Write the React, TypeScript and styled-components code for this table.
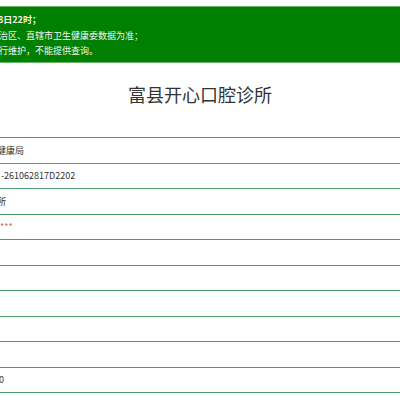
import React from "react";
import styled, { createGlobalStyle } from "styled-components";

const Global = createGlobalStyle`
  html, body { margin: 0; padding: 0; background: #fff; }
  body { font-family: "Microsoft YaHei", "Noto Sans CJK SC", "Noto Sans", sans-serif; overflow: hidden; }
`;

const Page = styled.div`
  width: 400px;
  height: 400px;
  overflow: hidden;
  padding-top: 6px;
  box-sizing: border-box;
`;

const Notice = styled.div`
  background: #008000;
  border-top: 1px solid #6cb36c;
  border-bottom: 1px solid #6cb36c;
  color: #f4f4f4;
  font-size: 9px;
  line-height: 15.5px;
  padding: 5px 0 3px;
  overflow: hidden;
  white-space: nowrap;
`;

const NoticeLine = styled.div<{ $bold?: boolean; $indent: number }>`
  font-weight: ${(p) => (p.$bold ? 700 : 400)};
  text-indent: ${(p) => p.$indent}px;
`;

const Title = styled.h1`
  margin: 19px 0 0;
  height: 55.7px;
  font-size: 18px;
  line-height: 24px;
  font-weight: 400;
  color: #333;
  text-align: center;
`;

const Table = styled.div`
  display: flex;
  flex-direction: column;
`;

const Row = styled.div`
  height: 24.5px;
  border-top: 1px solid #4f9a72;
  display: flex;
  align-items: center;
  font-size: 9px;
  color: #333;
  white-space: nowrap;
  overflow: hidden;
`;

const Value = styled.span<{ $indent: number; $red?: boolean }>`
  margin-left: ${(p) => p.$indent}px;
  color: ${(p) => (p.$red ? "#c46a6a" : "#333")};
`;

const rows: { text: string; indent: number; red?: boolean }[] = [
  { text: "健康局", indent: -3 },
  { text: "-261062817D2202", indent: 1 },
  { text: "所", indent: -3 },
  { text: "***", indent: 0, red: true },
  { text: "", indent: 0 },
  { text: "", indent: 0 },
  { text: "", indent: 0 },
  { text: "", indent: 0 },
  { text: "", indent: 0 },
  { text: "0", indent: -1 },
  { text: "", indent: 0 },
];

export default function App() {
  return (
    <>
      <Global />
      <Page>
        <Notice>
          <NoticeLine $bold $indent={-2}>8日22时；</NoticeLine>
          <NoticeLine $indent={-1}>治区、直辖市卫生健康委数据为准；</NoticeLine>
          <NoticeLine $indent={-1}>行维护，不能提供查询。</NoticeLine>
        </Notice>
        <Title>富县开心口腔诊所</Title>
        <Table>
          {rows.map((r, i) => (
            <Row key={i}>
              <Value $indent={r.indent} $red={r.red}>{r.text}</Value>
            </Row>
          ))}
        </Table>
      </Page>
    </>
  );
}
